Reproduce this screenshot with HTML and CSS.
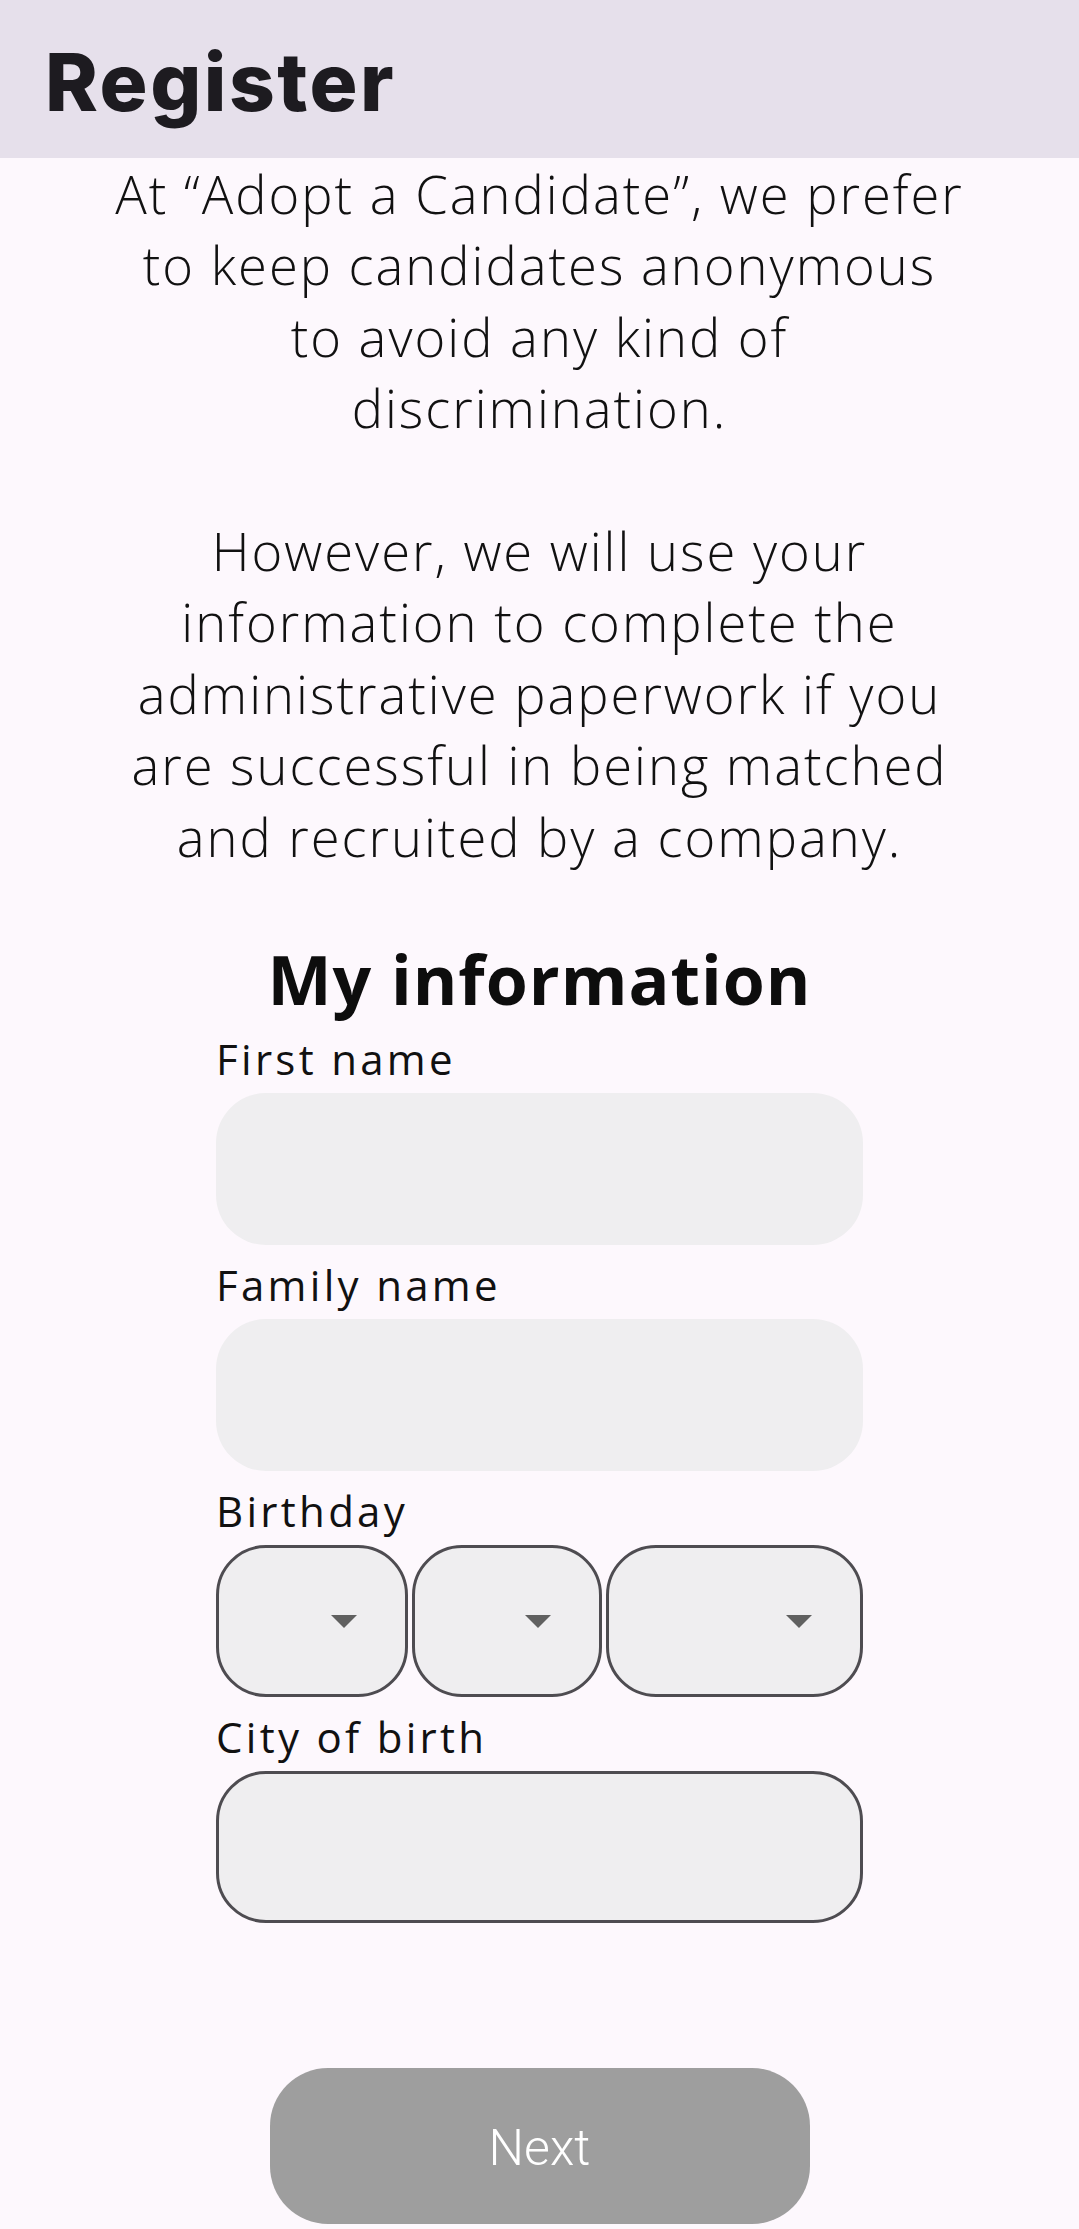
FILE: index.html
```html
<!DOCTYPE html>
<html lang="en">
<head>
<meta charset="utf-8">
<title>Register</title>
<link rel="stylesheet" href="styles.css">
</head>
<body>
<header class="topbar">
  <h1 class="title">Register</h1>
</header>
<main class="content">
  <p class="intro">At “Adopt a Candidate”, we prefer<br>to keep candidates anonymous<br>to avoid any kind of<br>discrimination.<br><br>However, we will use your<br>information to complete the<br>administrative paperwork if you<br>are successful in being matched<br>and recruited by a company.</p>
  <h2 class="section-title">My information</h2>
  <form class="form">
    <div class="field">
      <label class="label">First name</label>
      <div class="input input-plain"></div>
    </div>
    <div class="field">
      <label class="label">Family name</label>
      <div class="input input-plain"></div>
    </div>
    <div class="field">
      <label class="label">Birthday</label>
      <div class="birthday">
        <div class="select">
          <svg class="arrow" width="26" height="13" viewBox="0 0 26 13"><polygon points="0,0 26,0 13,13"/></svg>
        </div>
        <div class="select">
          <svg class="arrow" width="26" height="13" viewBox="0 0 26 13"><polygon points="0,0 26,0 13,13"/></svg>
        </div>
        <div class="select">
          <svg class="arrow" width="26" height="13" viewBox="0 0 26 13"><polygon points="0,0 26,0 13,13"/></svg>
        </div>
      </div>
    </div>
    <div class="field">
      <label class="label">City of birth</label>
      <div class="input input-outlined"></div>
    </div>
  </form>
  <button class="next" type="button">Next</button>
</main>
</body>
</html>
```
FILE: styles.css
```css
html, body {
  margin: 0;
  padding: 0;
}
body {
  background: #fdf8fd;
  color: #111;
  font-family: "Open Sans", "Liberation Sans", sans-serif;
  overflow: hidden;
}
.topbar {
  background: #e6e0eb;
  height: 158px;
  box-sizing: border-box;
  padding: 42px 0 0 45px;
}
.title {
  margin: 0;
  font-family: Inter, "Liberation Sans", sans-serif;
  font-weight: 800;
  font-size: 80px;
  line-height: 80px;
  letter-spacing: 2.5px;
  color: #1d1b20;
}
.content {
  display: flex;
  flex-direction: column;
  align-items: center;
}
.intro {
  margin: 0;
  text-align: center;
  font-weight: 300;
  font-size: 52.5px;
  line-height: 71.4px;
  letter-spacing: 2px;
  color: #111;
}
.section-title {
  margin: 66px 0 0 0;
  font-weight: 700;
  font-size: 68px;
  line-height: 82px;
  letter-spacing: 1px;
  color: #0d0d0d;
}
.form {
  width: 647px;
  margin-top: 14px;
  display: flex;
  flex-direction: column;
  gap: 15px;
}
.field {
  display: flex;
  flex-direction: column;
  gap: 9px;
}
.label {
  font-size: 42px;
  line-height: 50px;
  letter-spacing: 3.3px;
  color: #111;
}
.input {
  height: 152px;
  box-sizing: border-box;
  border-radius: 50px;
  background: #efeef0;
}
.input-outlined {
  border: 3px solid #4e4c51;
}
.birthday {
  display: grid;
  grid-template-columns: 192px 190px 1fr;
  gap: 4px;
}
.select {
  height: 152px;
  box-sizing: border-box;
  border: 3px solid #4e4c51;
  border-radius: 50px;
  background: #efeef0;
  display: flex;
  align-items: center;
  justify-content: flex-end;
  padding-right: 48px;
}
.arrow {
  display: block;
  fill: #606060;
}
.next {
  margin-top: 145px;
  width: 540px;
  height: 156px;
  border: none;
  border-radius: 58px;
  background: #9e9e9e;
  color: #fff;
  font-family: Roboto, "Liberation Sans", sans-serif;
  font-weight: 300;
  font-size: 50px;
  padding: 4px 0 0 0;
}
```
